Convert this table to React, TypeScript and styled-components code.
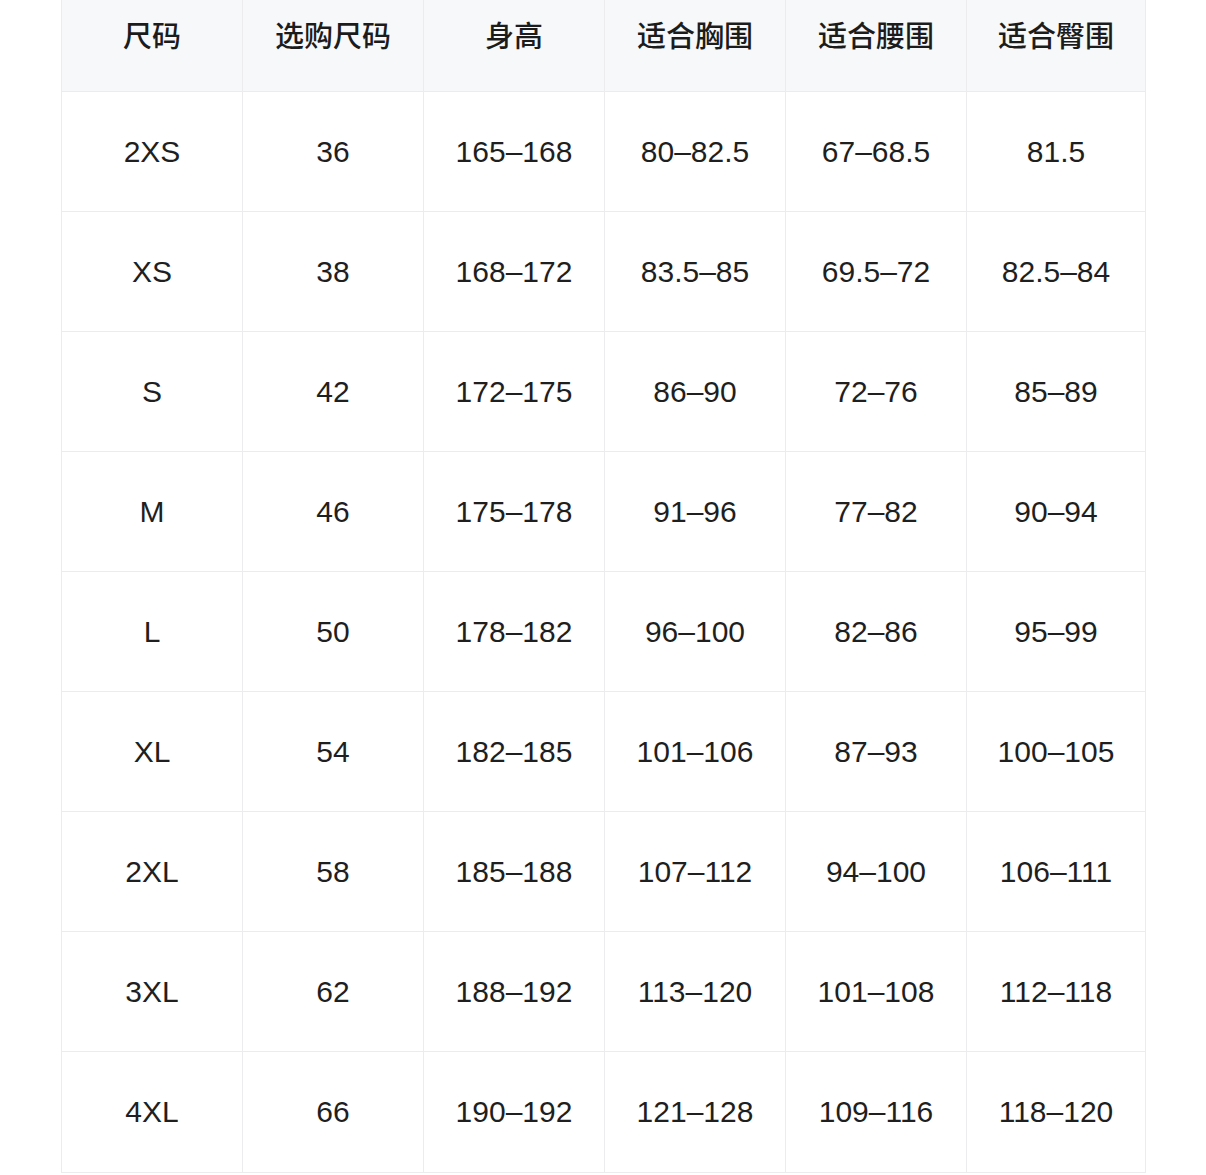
import React from 'react'
import styled, { createGlobalStyle } from 'styled-components'

const GlobalStyle = createGlobalStyle`
  html, body {
    margin: 0;
    padding: 0;
    background: #fff;
  }
  body {
    font-family: 'Liberation Sans', 'Noto Sans CJK SC', sans-serif;
  }
`

const Page = styled.div`
  width: 1206px;
  height: 1175px;
  overflow: hidden;
  padding-left: 61px;
  box-sizing: border-box;
`

const Table = styled.div`
  width: 1085px;
  display: grid;
  grid-template-columns: repeat(5, 181px) 1fr;
  border-left: 1px solid #ececef;
  border-bottom: 1px solid #ececef;
  box-sizing: border-box;
`

const HeadCell = styled.div`
  height: 92px;
  box-sizing: border-box;
  padding-bottom: 24px;
  display: flex;
  align-items: center;
  justify-content: center;
  background: #f7f8fa;
  border-right: 1px solid #ececef;
  border-bottom: 1px solid #ececef;
  font-family: 'Noto Sans CJK SC', sans-serif;
  font-size: 29px;
  font-weight: 500;
  color: #1c1c1c;
`

const Cell = styled.div`
  height: 120px;
  box-sizing: border-box;
  display: flex;
  align-items: center;
  justify-content: center;
  border-right: 1px solid #ececef;
  border-bottom: 1px solid #ececef;
  font-size: 30px;
  color: #1f1f1f;

  &:nth-last-child(-n + 6) {
    border-bottom: none;
  }
`

const headers = ['尺码', '选购尺码', '身高', '适合胸围', '适合腰围', '适合臀围']

const rows = [
  ['2XS', '36', '165–168', '80–82.5', '67–68.5', '81.5'],
  ['XS', '38', '168–172', '83.5–85', '69.5–72', '82.5–84'],
  ['S', '42', '172–175', '86–90', '72–76', '85–89'],
  ['M', '46', '175–178', '91–96', '77–82', '90–94'],
  ['L', '50', '178–182', '96–100', '82–86', '95–99'],
  ['XL', '54', '182–185', '101–106', '87–93', '100–105'],
  ['2XL', '58', '185–188', '107–112', '94–100', '106–111'],
  ['3XL', '62', '188–192', '113–120', '101–108', '112–118'],
  ['4XL', '66', '190–192', '121–128', '109–116', '118–120'],
]

const App = () => (
  <>
    <GlobalStyle />
    <Page>
      <Table>
        {headers.map((h) => (
          <HeadCell key={h}>{h}</HeadCell>
        ))}
        {rows.map((r, i) =>
          r.map((v, j) => <Cell key={`${i}-${j}`}>{v}</Cell>)
        )}
      </Table>
    </Page>
  </>
)

export default App
